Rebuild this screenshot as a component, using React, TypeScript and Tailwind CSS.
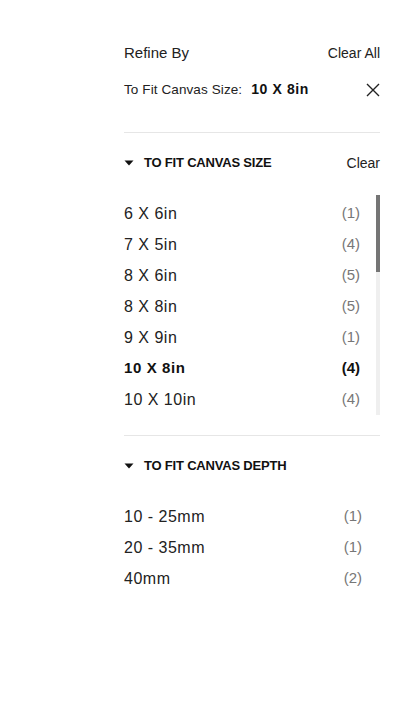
import React from "react";

type Option = { label: string; count: number; selected?: boolean };

// only the rows that show in the scroll window; the rest sit below the fold
const sizeOptions: Option[] = [
  { label: "6 X 6in", count: 1 },
  { label: "7 X 5in", count: 4 },
  { label: "8 X 6in", count: 5 },
  { label: "8 X 8in", count: 5 },
  { label: "9 X 9in", count: 1 },
  { label: "10 X 8in", count: 4, selected: true },
  { label: "10 X 10in", count: 4 },
];

const depthOptions: Option[] = [
  { label: "10 - 25mm", count: 1 },
  { label: "20 - 35mm", count: 1 },
  { label: "40mm", count: 2 },
];

function Caret() {
  return (
    <svg width="10" height="6" viewBox="0 0 10 6" className="shrink-0">
      <path d="M0.5 0.5 L9.5 0.5 L5 5.5 Z" fill="#111" />
    </svg>
  );
}

function CloseIcon() {
  return (
    <svg width="14" height="14" viewBox="0 0 14 14">
      <path d="M1 1 L13 13 M13 1 L1 13" stroke="#222" strokeWidth="1.4" />
    </svg>
  );
}

function OptionRow({ option }: { option: Option }) {
  return (
    <div className="flex h-[31px] items-center justify-between pr-[16px]">
      <span
        className={
          option.selected
            ? "text-[15px] font-bold tracking-[0.6px] text-[#111]"
            : "text-[16px] tracking-[0.5px] text-[#222]"
        }
      >
        {option.label}
      </span>
      <span
        className={
          option.selected
            ? "text-[15px] font-bold text-[#111]"
            : "text-[15px] text-[#777]"
        }
      >
        ({option.count})
      </span>
    </div>
  );
}

function SectionHeader({ title, clear }: { title: string; clear?: boolean }) {
  return (
    <div className="flex h-[22px] items-center justify-between">
      <div className="flex items-center gap-[10px]">
        <Caret />
        <span className="text-[13px] font-bold uppercase tracking-[-0.2px] text-[#111]">
          {title}
        </span>
      </div>
      {clear && <span className="text-[14px] text-[#222]">Clear</span>}
    </div>
  );
}

export default function App() {
  return (
    <div className="min-h-[718px] w-full bg-white font-['Liberation_Sans',Arial,sans-serif]">
      <div className="ml-[124px] w-[256px] pt-[42px]">
        <div className="flex h-[22px] items-center justify-between">
          <span className="text-[15px] text-[#222]">Refine By</span>
          <span className="text-[14px] text-[#222]">Clear All</span>
        </div>

        <div className="mt-[15px] flex h-[22px] items-center justify-between">
          <div className="flex items-baseline gap-[9px]">
            <span className="text-[13.5px] tracking-[0.1px] text-[#222]">To Fit Canvas Size:</span>
            <span className="text-[14px] font-bold tracking-[0.6px] text-[#111]">10 X 8in</span>
          </div>
          <CloseIcon />
        </div>

        <div className="mt-[31px] border-t border-[#e6e6e6]" />

        <div className="mt-[19px]">
          <SectionHeader title="To Fit Canvas Size" clear />
        </div>

        <div className="mt-[21px] flex h-[220px]">
          <div className="flex-1 overflow-hidden pt-[3px]">
            {sizeOptions.map((o) => (
              <OptionRow key={o.label} option={o} />
            ))}
          </div>
          <div className="flex w-[4px] flex-col bg-[#efefef]">
            <div className="h-[77px] bg-[#757575]" />
          </div>
        </div>

        <div className="mt-[20px] border-t border-[#e6e6e6]" />

        <div className="mt-[19px]">
          <SectionHeader title="To Fit Canvas Depth" />
        </div>

        <div className="mt-[24px] pr-[2px]">
          {depthOptions.map((o) => (
            <OptionRow key={o.label} option={o} />
          ))}
        </div>
      </div>
    </div>
  );
}
